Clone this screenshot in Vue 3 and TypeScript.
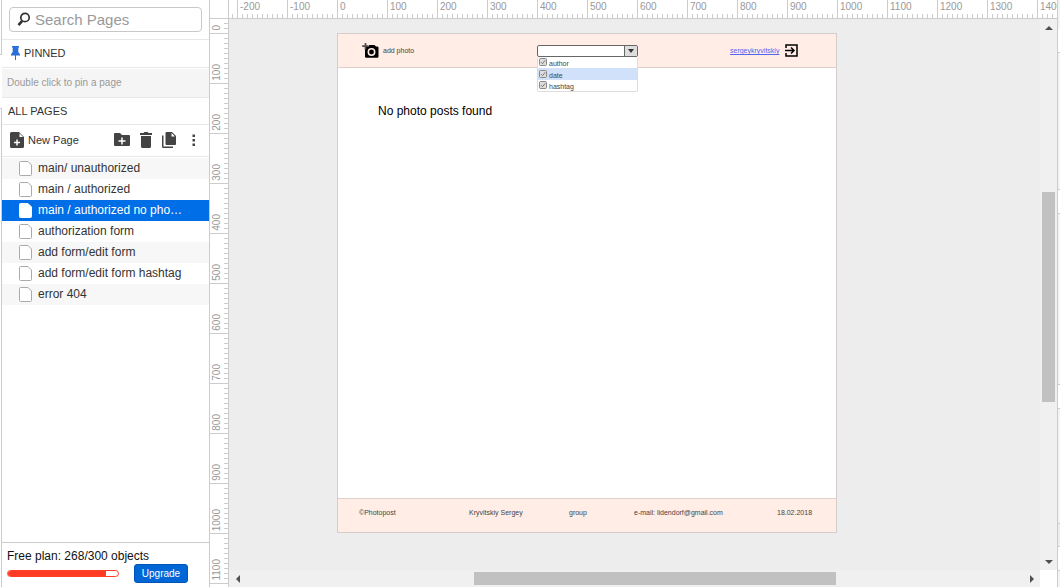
<script setup lang="ts">
import { ref } from 'vue'

interface Page {
  id: number
  name: string
}

const pages: Page[] = [
  { id: 1, name: 'main/ unauthorized' },
  { id: 2, name: 'main / authorized' },
  { id: 3, name: 'main / authorized no pho…' },
  { id: 4, name: 'authorization form' },
  { id: 5, name: 'add form/edit form' },
  { id: 6, name: 'add form/edit form hashtag' },
  { id: 7, name: 'error 404' },
]
const current = ref(3)
const query = ref('')

const used = 268
const limit = 300
const usedWidth = `${Math.round((used / limit) * 100)}%`

const horizontalMarks: number[] = Array.from({ length: 17 }, (_, i) => (i - 2) * 100)
const verticalMarks: number[] = Array.from({ length: 12 }, (_, i) => i * 100)

const filters = ref([
  { name: 'author', on: true },
  { name: 'date', on: true },
  { name: 'hashtag', on: true },
])
</script>

<template>
  <div class="app">
    <div class="edge-left"><span class="edge-top"></span><span class="edge-tab"></span><span class="edge-rest"></span></div>

    <aside class="sidebar">
      <div class="search-wrap">
        <label class="search">
          <svg width="14" height="15" viewBox="0 0 14 15" aria-hidden="true">
            <circle cx="8" cy="5.5" r="4.2" fill="none" stroke="#333" stroke-width="1.7" />
            <path d="M5.2 8.8 1.5 13.2" stroke="#333" stroke-width="2.6" />
          </svg>
          <input v-model="query" type="text" placeholder="Search Pages" aria-label="Search Pages" />
        </label>
      </div>

      <h2 class="heading pinned">
        <svg width="9" height="14" viewBox="0 0 9 14" aria-hidden="true">
          <path d="M1 0h7v1.5H7.3V6L9 8.3V9.5H5V14H4V9.5H0V8.3L1.7 6V1.5H1z" fill="#2a6fdb" />
        </svg>
        PINNED
      </h2>
      <p class="hint">Double click to pin a page</p>
      <h2 class="heading">ALL PAGES</h2>

      <div class="toolbar">
        <button class="new-page" type="button">
          <svg width="14" height="16" viewBox="0 0 14 16" aria-hidden="true">
            <path d="M1.5 0H9l5 5v9.5a1.500 1.500 0 0 1-1.500 1.500h-11A1.500 1.500 0 0 1 0 14.500v-13A1.500 1.500 0 0 1 1.500 0z" fill="#444" />
            <path d="M9.500 1.200V5h3.500" fill="#fff" />
            <path d="M7 7.500v6M4 10.500h6" stroke="#fff" stroke-width="1.500" />
          </svg>
          New Page
        </button>
        <div class="tools">
          <button type="button" aria-label="New folder">
            <svg width="16" height="13" viewBox="0 0 16 13" aria-hidden="true">
              <path d="M1 0h5l2 2h7a1 1 0 0 1 1 1v9a1 1 0 0 1-1 1H1a1 1 0 0 1-1-1V1a1 1 0 0 1 1-1z" fill="#444" />
              <path d="M8 4.500v7M4.500 8h7" stroke="#fff" stroke-width="1.500" />
            </svg>
          </button>
          <button type="button" aria-label="Delete page">
            <svg width="12" height="16" viewBox="0 0 12 16" aria-hidden="true">
              <path d="M0 1h3.500l.8-1h3.400l.8 1H12v2H0zM1 4h10v10.500A1.500 1.500 0 0 1 9.500 16h-7A1.500 1.500 0 0 1 1 14.500z" fill="#444" />
            </svg>
          </button>
          <button type="button" aria-label="Duplicate page">
            <svg width="14" height="16" viewBox="0 0 14 16" aria-hidden="true">
              <path d="M4.500 0H10l4 4v8a1 1 0 0 1-1 1H4.500a1 1 0 0 1-1-1V1a1 1 0 0 1 1-1z" fill="#444" />
              <path d="M9.500 1v3.500H13" fill="#fff" />
              <path d="M.75 3.500v11a.75.75 0 0 0 .75.75H11" fill="none" stroke="#444" stroke-width="1.500" />
            </svg>
          </button>
        </div>
        <button type="button" aria-label="More">
          <svg width="4" height="12" viewBox="0 0 4 12" aria-hidden="true">
            <path d="M.5.5h2.500v2.500H.5zM.5 5h2.500v2.500H.5zM.5 9.500h2.500V12H.5z" fill="#444" />
          </svg>
        </button>
      </div>

      <ul class="pages">
        <li v-for="page in pages" :key="page.id">
          <button type="button" class="page" :class="{ selected: page.id === current }" @click="current = page.id">
            <svg width="13" height="15" viewBox="0 0 13 15" aria-hidden="true">
              <path d="M1.500.5H9L12.500 4v9.500a1 1 0 0 1-1 1h-10a1 1 0 0 1-1-1v-12a1 1 0 0 1 1-1z" fill="#fff" :stroke="page.id === current ? '#fff' : '#aaa'" />
            </svg>
            <span>{{ page.name }}</span>
          </button>
        </li>
      </ul>

      <div class="plan">
        <p>Free plan: {{ used }}/{{ limit }} objects</p>
        <div class="plan-row">
          <div class="meter"><div class="meter-fill" :style="{ width: usedWidth }"></div></div>
          <button class="upgrade" type="button">Upgrade</button>
        </div>
      </div>
    </aside>

    <main class="editor">
      <div class="corner"></div>
      <div class="ruler-x">
        <span class="lead"></span>
        <span v-for="mark in horizontalMarks" :key="mark" class="mark">{{ mark }}</span>
      </div>
      <div class="ruler-y">
        <span v-for="mark in verticalMarks" :key="mark" class="mark"><span>{{ mark }}</span></span>
      </div>

      <section class="workspace">
        <div class="artboard">
          <header class="board-header">
            <div class="add-photo">
              <svg width="17" height="15" viewBox="0 0 17 15" aria-hidden="true">
                <path d="M3 4h3l1.500-2h5L14 3.500h1.500A1.300 1.300 0 0 1 16.500 5v8.500a1.300 1.300 0 0 1-1.300 1.300H4.300A1.300 1.300 0 0 1 3 13.500z" fill="#000" />
                <path d="M3.500 0v6.500M.2 3.200h6.500" stroke="#554b48" stroke-width="1.700" />
                <circle cx="9.500" cy="9" r="3.200" fill="#000" stroke="#ffede6" stroke-width="1.500" />
              </svg>
              add photo
            </div>
            <div class="combo">
              <div class="combo-field">
                <select aria-label="Filter by">
                  <option></option>
                  <option v-for="filter in filters" :key="filter.name">{{ filter.name }}</option>
                </select>
                <span class="combo-arrow">
                  <svg width="6" height="4" viewBox="0 0 6 4" aria-hidden="true"><path d="M0 0h6L3 4z" fill="#333" /></svg>
                </span>
              </div>
              <div class="combo-menu">
                <label v-for="filter in filters" :key="filter.name" :class="{ active: filter.name === 'date' }">
                  <input v-model="filter.on" type="checkbox" />
                  <svg class="tick" width="8" height="8" viewBox="0 0 8 8" aria-hidden="true">
                    <rect x=".5" y=".5" width="7" height="7" rx="1" fill="#ddd" stroke="#888" />
                    <path v-if="filter.on" d="M2 4.200 3.500 5.700 6.200 2.300" fill="none" stroke="#777" />
                  </svg>
                  <span>{{ filter.name }}</span>
                </label>
              </div>
            </div>
            <div class="account">
              <a href="#">sergeykryvitskiy</a>
              <svg width="13" height="13" viewBox="0 0 13 13" aria-hidden="true">
                <path d="M1 4V1h11v11H1V9" fill="none" stroke="#000" stroke-width="1.500" />
                <path d="M0 6.500h8.500M6 3.500l3 3-3 3" fill="none" stroke="#000" stroke-width="1.500" />
              </svg>
            </div>
          </header>
          <p class="empty">No photo posts found</p>
          <footer class="board-footer">
            <span>©Photopost</span>
            <span>Kryvitskiy Sergey</span>
            <span>group</span>
            <span>e-mail: lidendorf@gmail.com</span>
            <span>18.02.2018</span>
          </footer>
        </div>
      </section>

      <div class="scroll-y">
        <button type="button" aria-label="Scroll up"><svg width="8" height="4" viewBox="0 0 8 4"><path d="M0 4 4 0l4 4z" fill="#505050" /></svg></button>
        <span class="before"></span><span class="thumb"></span><span class="after"></span>
        <button type="button" aria-label="Scroll down"><svg width="8" height="4" viewBox="0 0 8 4"><path d="M0 0h8L4 4z" fill="#505050" /></svg></button>
      </div>
      <div class="scroll-x">
        <button type="button" aria-label="Scroll left"><svg width="4" height="8" viewBox="0 0 4 8"><path d="M4 0v8L0 4z" fill="#505050" /></svg></button>
        <span class="before"></span><span class="thumb"></span><span class="after"></span>
        <button type="button" aria-label="Scroll right"><svg width="4" height="8" viewBox="0 0 4 8"><path d="M0 0v8l4-4z" fill="#505050" /></svg></button>
      </div>
    </main>
    <div class="edge-right"></div>
  </div>
</template>

<style>
body {
  margin: 0;
  background: #fff;
}
</style>

<style scoped>
* {
  box-sizing: border-box;
}
.app {
  display: flex;
  height: 100vh;
  overflow: hidden;
  font-family: 'Liberation Sans', Arial, sans-serif;
  color: #333;
}
svg {
  display: block;
  flex: none;
}
button {
  padding: 0;
  border: 0;
  background: none;
  font: inherit;
  color: inherit;
  display: flex;
  align-items: center;
}
p,
h2,
ul {
  margin: 0;
  padding: 0;
  list-style: none;
}

.edge-left {
  width: 2px;
  flex: none;
  display: flex;
  flex-direction: column;
}
.edge-top {
  height: 55px;
  border-right: 1px solid #ccc;
  border-bottom: 1px solid #ccc;
}
.edge-tab {
  height: 53px;
}
.edge-rest {
  flex: 1;
  border-right: 1px solid #ccc;
  border-top: 1px solid #ccc;
}

.sidebar {
  width: 208px;
  flex: none;
  display: flex;
  flex-direction: column;
  border-right: 1px solid #ccc;
}
.search-wrap {
  padding: 7px 7px 7px;
  border-bottom: 1px solid #e8e8e8;
}
.search {
  display: flex;
  align-items: center;
  gap: 4px;
  height: 25px;
  padding-left: 7px;
  border: 1px solid #c8c8c8;
  border-radius: 4px;
}
.search input {
  flex: 1;
  min-width: 0;
  border: 0;
  outline: 0;
  padding: 0;
  background: none;
  font: 15px 'Liberation Sans', Arial, sans-serif;
}
.search input::placeholder {
  color: #999;
  opacity: 1;
}
.heading {
  display: flex;
  align-items: center;
  gap: 4px;
  height: 27px;
  padding-left: 6px;
  font-size: 11px;
  font-weight: 400;
  border-bottom: 1px solid #e8e8e8;
}
.heading.pinned {
  height: 28px;
  padding: 0 0 2px 9px;
}
.hint {
  margin-top: 1px;
  height: 29px;
  padding-left: 5px;
  font-size: 10px;
  line-height: 28px;
  color: #999;
  background: #f5f5f5;
  border-bottom: 1px solid #e8e8e8;
}
.toolbar {
  display: flex;
  align-items: center;
  justify-content: space-between;
  height: 32px;
  padding: 0 13px 2px 8px;
  border-bottom: 1px solid #e8e8e8;
}
.new-page {
  gap: 4px;
  font-size: 11px;
}
.tools {
  display: flex;
  align-items: center;
  gap: 10px;
  margin-left: 20px;
}
.pages {
  flex: 1;
  padding-top: 1px;
}
.pages li:nth-child(odd) {
  background: #f7f7f7;
}
.page {
  width: 100%;
  height: 21px;
  padding: 0 0 2px 17px;
  gap: 6px;
  font-size: 12px;
  text-align: left;
  white-space: nowrap;
}
.page svg {
  margin-top: 1px;
}
.page.selected {
  background: #006ee6;
  color: #fff;
}
.plan {
  height: 45px;
  padding: 6px 5px 0;
  border-top: 1px solid #ccc;
  font-size: 12px;
  line-height: 15px;
  color: #111;
}
.plan-row {
  display: flex;
  align-items: center;
  gap: 15px;
}
.meter {
  width: 112px;
  height: 7px;
  border: 1px solid #ff4028;
  border-radius: 4px;
  overflow: hidden;
}
.meter-fill {
  height: 100%;
  background: #ff3b24;
}
.upgrade {
  justify-content: center;
  width: 54px;
  height: 19px;
  border: 1px solid #0055b8;
  border-radius: 3px;
  background: #0066d6;
  color: #fff;
  font-size: 10px;
}

.editor {
  flex: 1;
  min-width: 0;
  display: grid;
  grid-template-columns: 19px minmax(0, 1fr) 17px;
  grid-template-rows: 19px minmax(0, 1fr) 17px;
}
.corner {
  border-right: 1px solid #ccc;
  border-bottom: 1px solid #ccc;
}
.ruler-x {
  grid-column: 2 / 4;
  display: flex;
  overflow: hidden;
  border-bottom: 1px solid #ccc;
  color: #999;
  font-size: 10px;
  line-height: 14px;
}
.ruler-x span {
  flex: none;
  width: 50px;
  background: repeating-linear-gradient(90deg, #ccc 0 1px, transparent 1px 5px) 0 100% / 100% 4px no-repeat;
}
.ruler-x .lead {
  width: 8px;
  background-position: 3px 100%;
}
.ruler-x .mark {
  padding-left: 2px;
  border-left: 1px solid #ccc;
  background-origin: border-box;
}
.ruler-y {
  grid-row: 2 / 4;
  grid-column: 1;
  display: flex;
  flex-direction: column;
  overflow: hidden;
  border-right: 1px solid #ccc;
  color: #999;
  font-size: 10px;
  line-height: 14px;
}
.ruler-y .mark {
  flex: none;
  display: flex;
  align-items: flex-end;
  height: 50px;
  padding-bottom: 2px;
  border-bottom: 1px solid #ccc;
  background: repeating-linear-gradient(0deg, #ccc 0 1px, transparent 1px 5px) 100% 0 / 4px 100% no-repeat;
  background-origin: border-box;
}
.ruler-y .mark:first-child {
  height: 15px;
}
.ruler-y .mark span {
  writing-mode: vertical-rl;
  transform: rotate(180deg);
}
.workspace {
  grid-row: 2;
  grid-column: 2;
  overflow: hidden;
  padding: 14px 0 0 108px;
  background: #ededed;
}
.artboard {
  display: flex;
  flex-direction: column;
  width: 500px;
  height: 500px;
  background: #fff;
  border: 1px solid #d5cdca;
  color: #444;
  font-size: 7px;
  line-height: 9px;
}
.board-header {
  display: grid;
  grid-template-columns: 175px 193px 1fr;
  align-items: center;
  height: 34px;
  padding-left: 24px;
  background: #ffede6;
  border-bottom: 1px solid #e0d0ca;
}
.add-photo {
  display: flex;
  align-items: center;
  gap: 4px;
}
.combo {
  position: relative;
  width: 101px;
}
.combo-field {
  display: flex;
  height: 12px;
  border: 1px solid #666;
  border-radius: 2px;
  background: #fff;
}
.combo-field select {
  flex: 1;
  min-width: 0;
  appearance: none;
  border: 0;
  padding: 0;
  background: none;
  font-size: 7px;
}
.combo-arrow {
  display: grid;
  place-items: center;
  width: 13px;
  border-left: 1px solid #666;
  background: #ddd;
}
.combo-menu {
  position: absolute;
  top: 100%;
  left: 0;
  width: 100%;
  background: #fff;
  border: 1px solid #ddd;
  border-top: 0;
  border-radius: 2px;
}
.combo-menu label {
  display: flex;
  gap: 2px;
  height: 11px;
  padding: 1px 0 0 1px;
}
.combo-menu label span {
  padding-top: 1px;
}
.combo-menu .active {
  height: 12px;
  padding-top: 2px;
  background: #d2e1fa;
}
.combo-menu input {
  position: absolute;
  width: 8px;
  height: 8px;
  margin: 0;
  opacity: 0;
}
.account {
  display: flex;
  align-items: center;
  gap: 6px;
}
.account a {
  color: #5566ee;
  text-decoration: underline;
}
.empty {
  flex: 1;
  padding: 36px 40px 0;
  font-size: 12px;
  line-height: 14px;
  color: #000;
}
.board-footer {
  display: grid;
  grid-template-columns: 110px 100px 65px 143px 1fr;
  align-items: center;
  height: 34px;
  padding: 0 0 6px 21px;
  background: #ffede6;
  border-top: 1px solid #e0d0ca;
  white-space: nowrap;
}

.scroll-y,
.scroll-x {
  display: flex;
  background: #f0f0f0;
}
.scroll-y {
  grid-row: 2;
  grid-column: 3;
  flex-direction: column;
  padding: 0 2px;
}
.scroll-x {
  grid-row: 3;
  grid-column: 2;
  padding: 2px 0;
}
.scroll-y button {
  height: 17px;
  justify-content: center;
}
.scroll-x button {
  width: 17px;
  justify-content: center;
}
.scroll-y .before {
  flex: 156;
}
.scroll-y .thumb {
  flex: 210;
}
.scroll-y .after {
  flex: 151;
}
.scroll-x .before {
  flex: 228;
}
.scroll-x .thumb {
  flex: 362;
}
.scroll-x .after {
  flex: 187;
}
.thumb {
  background: #c1c1c1;
}
.edge-right {
  width: 3px;
  flex: none;
  border-left: 1px solid #ccc;
  background: linear-gradient(
    #f4f4f4 0 29px, #fff 29px 52px, #ccc 52px 53px, #f4f4f4 53px 189px, #ccc 189px 190px,
    #fff 190px 213px, #ccc 213px 214px, #f4f4f4 214px 384px, #ccc 384px 385px, #fff 385px 408px,
    #ccc 408px 409px, #f4f4f4 409px 523px, #ccc 523px 524px, #ededed 524px 546px, #ccc 546px 547px,
    #fff 547px 570px, #ccc 570px 571px, #f4f4f4 571px
  );
}
</style>
